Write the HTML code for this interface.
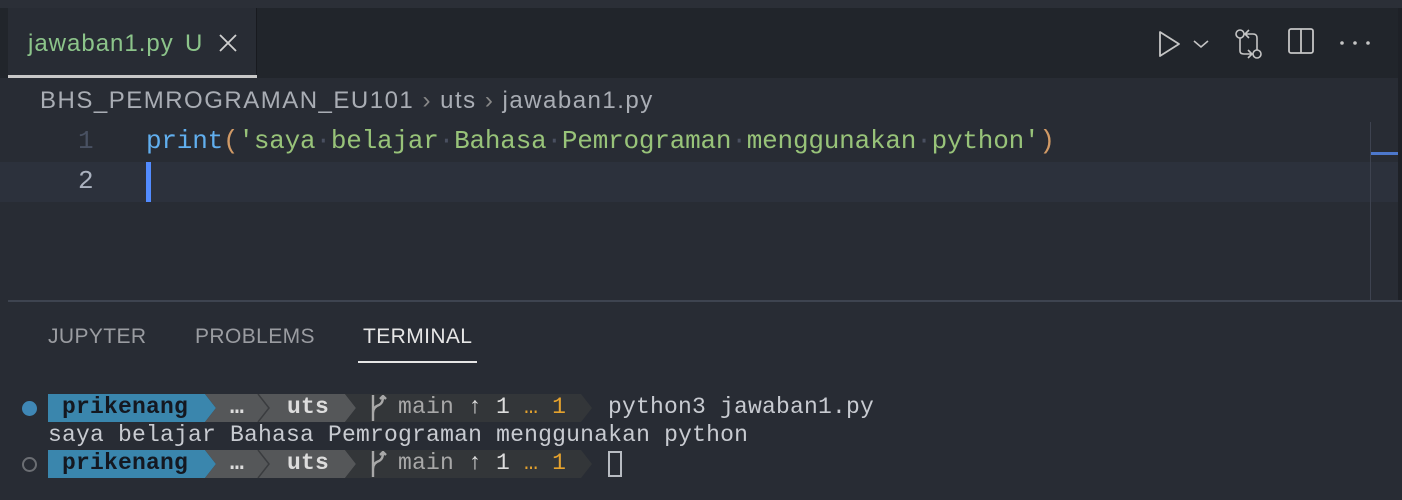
<!DOCTYPE html>
<html><head><meta charset="utf-8"><style>
*{margin:0;padding:0;box-sizing:border-box}
body{width:1402px;height:500px;background:#282c34;position:relative;overflow:hidden;font-family:"Liberation Sans",sans-serif}
.a{position:absolute;white-space:pre}
.mono{font-family:"Liberation Mono",monospace}
.code{font-size:26px;letter-spacing:-0.2px}
.term{font-size:23px;letter-spacing:0.2px;color:#c8cbd1}
.seg{position:absolute;height:28px}
</style></head><body>
<div class="a" style="left:0;top:0;width:1402px;height:8px;background:#2b2f37"></div>
<div class="a" style="left:0;top:8px;width:1402px;height:70px;background:#21252b"></div>
<div class="a" style="left:8px;top:8px;width:249px;height:70px;background:#282c34;border-right:1px solid #181a1f"></div>
<div class="a" style="left:8px;top:75px;width:249px;height:3px;background:#c8c8c8"></div>
<div class="a" style="left:28px;top:30px;font-size:24px;letter-spacing:1px;color:#8cc48a">jawaban1.py</div>
<div class="a" style="left:185px;top:30px;font-size:24px;color:#8cc48a">U</div>
<svg class="a" style="left:218px;top:33px" width="20" height="20"><path d="M2 2L18 18M18 2L2 18" stroke="#d0d0d0" stroke-width="1.8"/></svg>
<svg class="a" style="left:1155px;top:28px" width="240" height="34" viewBox="0 0 240 34">
<path d="M5 4L24 16L5 28Z" fill="none" stroke="#c5c5c5" stroke-width="1.8" stroke-linejoin="round"/>
<path d="M39 13L46 19L53 13" fill="none" stroke="#c5c5c5" stroke-width="1.6"/>
<circle cx="85" cy="6" r="4" fill="none" stroke="#c5c5c5" stroke-width="1.6"/>
<circle cx="102" cy="26" r="4" fill="none" stroke="#c5c5c5" stroke-width="1.6"/>
<path d="M85 10V23Q85 26 89 26H97M93 22L97 26L93 30M102 22V10Q102 6 98 6H90M94 2L90 6L94 10" fill="none" stroke="#c5c5c5" stroke-width="1.6"/>
<rect x="134" y="1" width="24" height="24" rx="2" fill="none" stroke="#c5c5c5" stroke-width="1.8"/>
<path d="M146 1V25" stroke="#c5c5c5" stroke-width="1.8"/>
<circle cx="187" cy="15" r="1.8" fill="#c5c5c5"/><circle cx="200" cy="15" r="1.8" fill="#c5c5c5"/><circle cx="213" cy="15" r="1.8" fill="#c5c5c5"/>
</svg>
<div class="a" style="left:40px;top:87px;font-size:24px;letter-spacing:1.5px;color:#a9adb4">BHS_PEMROGRAMAN_EU101 <span style="color:#888">›</span> uts <span style="color:#888">›</span> jawaban1.py</div>
<div class="a" style="left:0;top:162px;width:1398px;height:40px;background:#2c313c"></div>
<div class="a" style="left:1370px;top:122px;width:1px;height:178px;background:#3e4350"></div>
<div class="a" style="left:1371px;top:152px;width:27px;height:3px;background:#4d78cc"></div>
<div class="a" style="left:1398px;top:8px;width:4px;height:292px;background:#1e2127"></div>
<div class="a mono code" style="left:78px;top:126px;color:#495162">1</div>
<div class="a mono code" style="left:78px;top:166px;color:#abb2bf">2</div>
<div class="a mono code" style="left:146px;top:126px"><span style="color:#61afef">print</span><span style="color:#d19a66">(</span><span style="color:#98c379">'saya<span style="color:#4a5060">·</span>belajar<span style="color:#4a5060">·</span>Bahasa<span style="color:#4a5060">·</span>Pemrograman<span style="color:#4a5060">·</span>menggunakan<span style="color:#4a5060">·</span>python'</span><span style="color:#d19a66">)</span></div>
<div class="a" style="left:146px;top:162px;width:5px;height:40px;background:#528bff"></div>
<div class="a" style="left:8px;top:300px;width:1394px;height:2px;background:#3e4450"></div>
<div class="a" style="left:48px;top:325px;font-size:21px;letter-spacing:0.4px;color:#9a9ca1">JUPYTER</div>
<div class="a" style="left:195px;top:325px;font-size:21px;letter-spacing:0.4px;color:#9a9ca1">PROBLEMS</div>
<div class="a" style="left:363px;top:325px;font-size:21px;letter-spacing:0.4px;color:#e6e6e6">TERMINAL</div>
<div class="a" style="left:358px;top:361px;width:119px;height:2px;background:#e6e6e6"></div>

<!-- row 1 -->
<div class="a" style="left:22px;top:401px;width:15px;height:15px;border-radius:50%;background:#3f87b5"></div>
<div class="seg" style="left:48px;top:394px;width:170px;background:#3a86ad;clip-path:polygon(0 0,157px 0,168px 50%,157px 100%,0 100%)"></div>
<div class="seg" style="left:205px;top:394px;width:152px;background:#555759;clip-path:polygon(0 0,140px 0,151px 50%,140px 100%,0 100%,11px 50%)"></div>
<svg class="a" style="left:256px;top:394px" width="16" height="28"><path d="M2 0L13 14L2 28" fill="none" stroke="#3a3c3f" stroke-width="1.5"/></svg>
<div class="seg" style="left:345px;top:394px;width:248px;background:#333639;clip-path:polygon(0 0,236px 0,247px 50%,236px 100%,0 100%,11px 50%)"></div>
<div class="a mono term" style="left:62px;top:394px;color:#141820;font-weight:bold">prikenang</div>
<div class="a mono term" style="left:230px;top:394px;color:#ddd;font-weight:bold">…</div>
<div class="a mono term" style="left:287px;top:394px;color:#ddd;font-weight:bold">uts</div>
<svg class="a" style="left:370px;top:395px" width="18" height="28"><path d="M3 0V26M3 18Q3 12 9 10Q13 8 13 2M10 4L13 1L16 4" fill="none" stroke="#a8a8a8" stroke-width="2.4"/></svg>
<div class="a mono term" style="left:398px;top:394px;color:#a8a8a8">main <span style="color:#ddd">↑</span> <span style="color:#ddd">1</span> <span style="color:#e5a22d">…</span> <span style="color:#e5a22d">1</span></div>
<div class="a mono term" style="left:608px;top:394px">python3 jawaban1.py</div>
<!-- row 2 -->
<div class="a mono term" style="left:48px;top:422px">saya belajar Bahasa Pemrograman menggunakan python</div>
<!-- row 3 -->
<div class="a" style="left:22px;top:457px;width:15px;height:15px;border-radius:50%;border:2px solid #6b6e73"></div>
<div class="seg" style="left:48px;top:450px;width:170px;background:#3a86ad;clip-path:polygon(0 0,157px 0,168px 50%,157px 100%,0 100%)"></div>
<div class="seg" style="left:205px;top:450px;width:152px;background:#555759;clip-path:polygon(0 0,140px 0,151px 50%,140px 100%,0 100%,11px 50%)"></div>
<svg class="a" style="left:256px;top:450px" width="16" height="28"><path d="M2 0L13 14L2 28" fill="none" stroke="#3a3c3f" stroke-width="1.5"/></svg>
<div class="seg" style="left:345px;top:450px;width:248px;background:#333639;clip-path:polygon(0 0,236px 0,247px 50%,236px 100%,0 100%,11px 50%)"></div>
<div class="a mono term" style="left:62px;top:450px;color:#141820;font-weight:bold">prikenang</div>
<div class="a mono term" style="left:230px;top:450px;color:#ddd;font-weight:bold">…</div>
<div class="a mono term" style="left:287px;top:450px;color:#ddd;font-weight:bold">uts</div>
<svg class="a" style="left:370px;top:451px" width="18" height="28"><path d="M3 0V26M3 18Q3 12 9 10Q13 8 13 2M10 4L13 1L16 4" fill="none" stroke="#a8a8a8" stroke-width="2.4"/></svg>
<div class="a mono term" style="left:398px;top:450px;color:#a8a8a8">main <span style="color:#ddd">↑</span> <span style="color:#ddd">1</span> <span style="color:#e5a22d">…</span> <span style="color:#e5a22d">1</span></div>
<div class="a" style="left:608px;top:451px;width:14px;height:26px;border:2px solid #b8bcc2"></div>
</body></html>
